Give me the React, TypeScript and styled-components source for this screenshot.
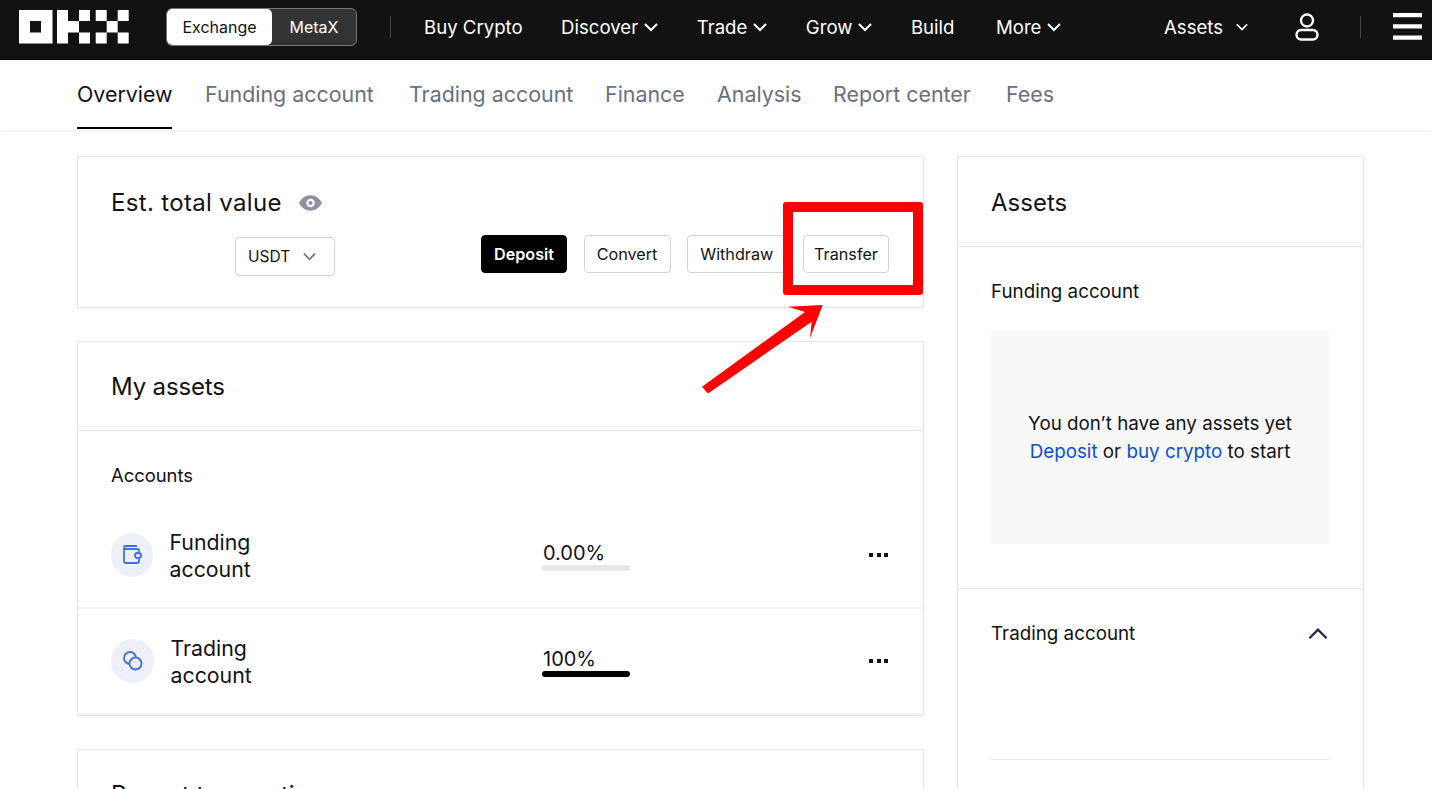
import * as React from "react";
import styled, { createGlobalStyle } from "styled-components";

const GlobalStyle = createGlobalStyle`
  html, body {
    margin: 0;
    padding: 0;
    height: 789px;
    overflow: hidden;
    background: #fff;
    font-family: Inter, "Noto Sans", "Liberation Sans", sans-serif;
    color: #121212;
  }
  * {
    box-sizing: border-box;
  }
`;

const Page = styled.div`
  position: relative;
  width: 1432px;
  height: 789px;
  overflow: hidden;
`;

const Header = styled.header`
  display: flex;
  align-items: center;
  height: 60px;
  padding: 0 10px 6px 19px;
  background: #121212;
  color: #fff;
  border-bottom: 1px solid #000;
`;
const ModeSwitch = styled.div`
  display: flex;
  width: 191px;
  height: 38px;
  margin-left: 35px;
  border: 1px solid #777;
  border-radius: 6px;
  background: #333;
  overflow: hidden;
`;
const ModeTab = styled.div<{ $active?: boolean }>`
  display: flex;
  align-items: center;
  justify-content: center;
  width: ${(p) => (p.$active ? "105px" : "84px")};
  font-size: 16px;
  border-radius: 5px;
  background: ${(p) => (p.$active ? "#fff" : "transparent")};
  color: ${(p) => (p.$active ? "#121212" : "#fff")};
`;
const HeaderRule = styled.div<{ $left: number; $right: number }>`
  width: 1px;
  height: 22px;
  background: #444;
  margin: 0 ${(p) => p.$right}px 0 ${(p) => p.$left}px;
`;
const NavItem = styled.div`
  display: flex;
  align-items: center;
  gap: 6px;
  margin-right: 38.500px;
  font-size: 18.600px;
  white-space: nowrap;
`;
const BuildItem = styled(NavItem)`
  margin-right: 41.500px;
`;
const AssetsItem = styled(NavItem)`
  gap: 13px;
  margin-right: 47px;
`;
const HeaderRight = styled.div`
  display: flex;
  align-items: center;
  margin-left: auto;
`;

const Tabs = styled.nav`
  display: flex;
  gap: 33px;
  height: 70px;
  padding-left: 77px;
  background: #fff;
  box-shadow: 0 1px 4px rgba(0, 0, 0, 0.08);
`;
const TabItem = styled.div<{ $active?: boolean; $width: number }>`
  display: flex;
  align-items: center;
  width: ${(p) => p.$width}px;
  height: 69px;
  padding-top: 1px;
  font-size: 21.400px;
  white-space: nowrap;
  color: ${(p) => (p.$active ? "#121212" : "#68707f")};
  border-bottom: 2px solid ${(p) => (p.$active ? "#000" : "transparent")};
`;

const Content = styled.main`
  display: grid;
  grid-template-columns: 847px 407px;
  gap: 33px;
  padding: 26px 0 0 77px;
`;
const Column = styled.div`
  display: flex;
  flex-direction: column;
  gap: 33px;
`;
const Card = styled.section`
  background: #fff;
  border: 1px solid #e6e6ee;
  box-shadow: 0 1px 3px rgba(0, 0, 0, 0.05);
`;
const TotalCard = styled(Card)`
  height: 152px;
  padding: 30px 33px 0;
`;
const TitleRow = styled.div`
  display: flex;
  align-items: center;
  gap: 17px;
`;
const CardTitle = styled.h2<{ $spacing?: number }>`
  margin: 0;
  font-size: 24px;
  font-weight: 400;
  line-height: 32px;
  letter-spacing: ${(p) => p.$spacing ?? 0}px;
`;
const ActionRow = styled.div`
  display: flex;
  align-items: flex-start;
  margin-top: 16px;
  padding-left: 124px;
`;
const CurrencySelect = styled.div`
  display: flex;
  align-items: center;
  width: 100px;
  height: 39px;
  padding-left: 12px;
  gap: 13px;
  margin-top: 2px;
  border: 1px solid #d0d0d0;
  border-radius: 4px;
  font-size: 15.500px;
`;
const Buttons = styled.div`
  display: flex;
  gap: 16.500px;
  margin-left: 146px;
`;
const ActionButton = styled.div<{ $primary?: boolean; $width: number }>`
  display: flex;
  align-items: center;
  justify-content: center;
  width: ${(p) => p.$width}px;
  height: 38px;
  border: 1px solid ${(p) => (p.$primary ? "#000" : "#d4d4d4")};
  border-radius: 4px;
  background: ${(p) => (p.$primary ? "#000" : "#fff")};
  color: ${(p) => (p.$primary ? "#fff" : "#121212")};
  font-size: 16.200px;
  font-weight: ${(p) => (p.$primary ? 600 : 400)};
`;

const AssetsCard = styled(Card)`
  height: 375px;
`;
const CardHead = styled.div<{ $height: number }>`
  display: flex;
  align-items: center;
  height: ${(p) => p.$height}px;
  padding: 2px 33px 0;
  border-bottom: 1px solid #e6e6ee;
`;
const SubHead = styled.div`
  padding: 32px 33px 0;
  height: 72px;
  font-size: 18.400px;
  line-height: 24px;
`;
const AccountRow = styled.div`
  display: grid;
  grid-template-columns: 431px 88px 1fr;
  align-items: center;
  height: 106px;
  padding: 0 34px 0 33px;
  border-bottom: 2px solid #f2f2f6;
`;
const AccountName = styled.div`
  display: flex;
  align-items: center;
  gap: 16.500px;
  padding-top: 2px;
  font-size: 21.300px;
  line-height: 27.500px;
`;
const IconDisc = styled.div<{ $width: number }>`
  display: flex;
  align-items: center;
  justify-content: center;
  width: ${(p) => p.$width}px;
  height: 44px;
  margin-top: -2px;
  border-radius: 50%;
  background: #edf0f9;
`;
const Share = styled.div`
  font-size: 20px;
  line-height: 28px;
  padding-left: 1px;
`;
const ShareBar = styled.div`
  height: 6px;
  margin: -2px 0 0 -1px;
  border-radius: 3px;
  background: #e6e6e6;
  overflow: hidden;
`;
const ShareFill = styled.div`
  height: 100%;
  background: #000;
`;
const More = styled.div`
  display: flex;
  justify-content: flex-end;
  gap: 3.500px;
  padding-right: 1px;
  margin-bottom: 1px;
`;
const Dot = styled.span`
  width: 4px;
  height: 4px;
  background: #121212;
`;
const RecentCard = styled(Card)`
  height: 140px;
  padding: 29px 33px;
`;

const SideCard = styled(Card)`
  height: 700px;
`;
const SideSection = styled.div`
  padding: 33px 34px 44px 33px;
  border-bottom: 1px solid #e6e6ee;
`;
const SideHead = styled.div`
  display: flex;
  align-items: center;
  justify-content: space-between;
  padding-right: 1px;
  font-size: 18.800px;
  line-height: 24px;
`;
const EmptyBox = styled.div`
  display: flex;
  flex-direction: column;
  align-items: center;
  justify-content: center;
  height: 214px;
  margin-top: 26px;
  padding-top: 2px;
  background: #f8f8f8;
  font-size: 18.800px;
  line-height: 28px;
  white-space: nowrap;
`;
const BlueLink = styled.span`
  color: #0a4fd5;
`;
const InnerRule = styled.div`
  height: 1px;
  margin-top: 113px;
  background: #e6e6ee;
`;

const HighlightBox = styled.div`
  position: absolute;
  left: 783px;
  top: 202px;
  width: 140px;
  height: 93px;
  border: 10px solid #fe0000;
  border-radius: 3px;
`;
const Arrow = styled.svg`
  position: absolute;
  left: 700px;
  top: 300px;
  width: 130px;
  height: 100px;
`;

const Logo = () => (
  <svg width="112" height="34" viewBox="0 0 112 34" fill="#fff">
    <path fillRule="evenodd" d="M0 0h33.500v33.500H0z M11 11v11.500h11V11z" />
    <path d="M38 0h11v33.500H38z M49 11h11v11.500H49z M60 0h11v11H60z M60 22.500h11v11H60z" />
    <path d="M76.700 0h11v11h-11z M76.700 22.500h11v11h-11z M87.700 11h11v11.500h-11z M98.700 0h11v11h-11z M98.700 22.500h11v11h-11z" />
  </svg>
);

const Chevron = ({ size = 14, up, color = "currentColor", width = 2 }: { size?: number; up?: boolean; color?: string; width?: number }) => (
  <svg width={size} height={size} viewBox="0 0 14 14" fill="none" stroke={color} strokeWidth={width}>
    <path d={up ? "M1 10l6-6 6 6" : "M1 4l6 6 6-6"} />
  </svg>
);

const nav = ["Discover", "Trade", "Grow"];

const tabs = [
  { label: "Overview", width: 95, active: true },
  { label: "Funding account", width: 171 },
  { label: "Trading account", width: 163 },
  { label: "Finance", width: 79 },
  { label: "Analysis", width: 83 },
  { label: "Report center", width: 140 },
  { label: "Fees", width: 47 },
];

export default function App() {
  return (
    <Page>
      <GlobalStyle />
      <Header>
        <Logo />
        <ModeSwitch>
          <ModeTab $active>Exchange</ModeTab>
          <ModeTab>MetaX</ModeTab>
        </ModeSwitch>
        <HeaderRule $left={33} $right={33} />
        <NavItem>Buy Crypto</NavItem>
        {nav.map((label) => (
          <NavItem key={label}>
            {label}
            <Chevron />
          </NavItem>
        ))}
        <BuildItem>Build</BuildItem>
        <NavItem>
          More
          <Chevron />
        </NavItem>
        <HeaderRight>
          <AssetsItem>
            Assets
            <Chevron size={12} />
          </AssetsItem>
          <svg width="24" height="28" viewBox="0 0 24 28" fill="none" stroke="#fff" strokeWidth="2.4">
            <circle cx="12" cy="7.500" r="6" />
            <rect x="1.500" y="17" width="21" height="9.500" rx="4.700" />
          </svg>
          <HeaderRule $left={41} $right={32} />
          <svg width="29" height="27" viewBox="0 0 29 27" fill="#fff">
            <path d="M0 0h29v4.300H0z M0 11.300h29v4.300H0z M0 22.500h29v4.300H0z" />
          </svg>
        </HeaderRight>
      </Header>
      <Tabs>
        {tabs.map((t) => (
          <TabItem key={t.label} $active={t.active} $width={t.width}>
            {t.label}
          </TabItem>
        ))}
      </Tabs>
      <Content>
        <Column>
          <TotalCard>
            <TitleRow>
              <CardTitle $spacing={0.33}>Est. total value</CardTitle>
              <svg width="23" height="16" viewBox="0 0 24 16">
                <path fill="#8c90a0" fillRule="evenodd" d="M12 0c5.500 0 9.500 3.500 12 8-2.500 4.500-6.500 8-12 8S2.500 12.500 0 8c2.500-4.500 6.500-8 12-8zm0 3.500a4.500 4.500 0 100 9 4.500 4.500 0 000-9zm0 2.300a2.200 2.200 0 110 4.400 2.200 2.200 0 010-4.400z" />
              </svg>
            </TitleRow>
            <ActionRow>
              <CurrencySelect>
                USDT
                <Chevron size={13} color="#777" />
              </CurrencySelect>
              <Buttons>
                <ActionButton $primary $width={86}>Deposit</ActionButton>
                <ActionButton $width={87}>Convert</ActionButton>
                <ActionButton $width={99.5}>Withdraw</ActionButton>
                <ActionButton $width={86}>Transfer</ActionButton>
              </Buttons>
            </ActionRow>
          </TotalCard>
          <AssetsCard>
            <CardHead $height={89}>
              <CardTitle $spacing={-0.15}>My assets</CardTitle>
            </CardHead>
            <SubHead>Accounts</SubHead>
            <AccountRow>
              <AccountName>
                <IconDisc $width={42}>
                  <svg width="20" height="22" viewBox="0 0 20 22" fill="none" stroke="#3f6fe6" strokeWidth="1.8">
                    <path d="M15 2H3.500A1.500 1.500 0 002 3.500v14A1.500 1.500 0 003.500 19H15a2 2 0 002-2v-3M2 5h13a2 2 0 012 2v2" />
                    <rect x="13" y="9" width="6" height="5" rx="2.500" />
                  </svg>
                </IconDisc>
                <div>
                  Funding
                  <br />
                  account
                </div>
              </AccountName>
              <Share>
                0.00%
                <ShareBar />
              </Share>
              <More>
                <Dot />
                <Dot />
                <Dot />
              </More>
            </AccountRow>
            <AccountRow>
              <AccountName>
                <IconDisc $width={43}>
                  <svg width="22" height="22" viewBox="0 0 22 22" fill="none" stroke="#3f6fe6" strokeWidth="1.8">
                    <circle cx="8" cy="8" r="6" />
                    <circle cx="13.500" cy="13.500" r="6" fill="#edf0f9" />
                  </svg>
                </IconDisc>
                <div>
                  Trading
                  <br />
                  account
                </div>
              </AccountName>
              <Share>
                100%
                <ShareBar>
                  <ShareFill style={{ width: "100%" }} />
                </ShareBar>
              </Share>
              <More>
                <Dot />
                <Dot />
                <Dot />
              </More>
            </AccountRow>
          </AssetsCard>
          <RecentCard>
            <CardTitle>Recent transactions</CardTitle>
          </RecentCard>
        </Column>
        <Column>
          <SideCard>
            <CardHead $height={90}>
              <CardTitle>Assets</CardTitle>
            </CardHead>
            <SideSection>
              <SideHead>Funding account</SideHead>
              <EmptyBox>
                <div>You don’t have any assets yet</div>
                <div>
                  <BlueLink>Deposit</BlueLink> or <BlueLink>buy crypto</BlueLink> to start
                </div>
              </EmptyBox>
            </SideSection>
            <SideSection>
              <SideHead>
                Trading account
                <Chevron size={20} up color="#1d2b45" width={1.6} />
              </SideHead>
              <InnerRule />
            </SideSection>
          </SideCard>
        </Column>
      </Content>
      <HighlightBox />
      <Arrow viewBox="0 0 130 100">
        <path fill="#fe0000" d="M122.700 5L88 6.700 105 12 2 86.700 8 93.500 111.700 21.700 110 38z" />
      </Arrow>
    </Page>
  );
}
